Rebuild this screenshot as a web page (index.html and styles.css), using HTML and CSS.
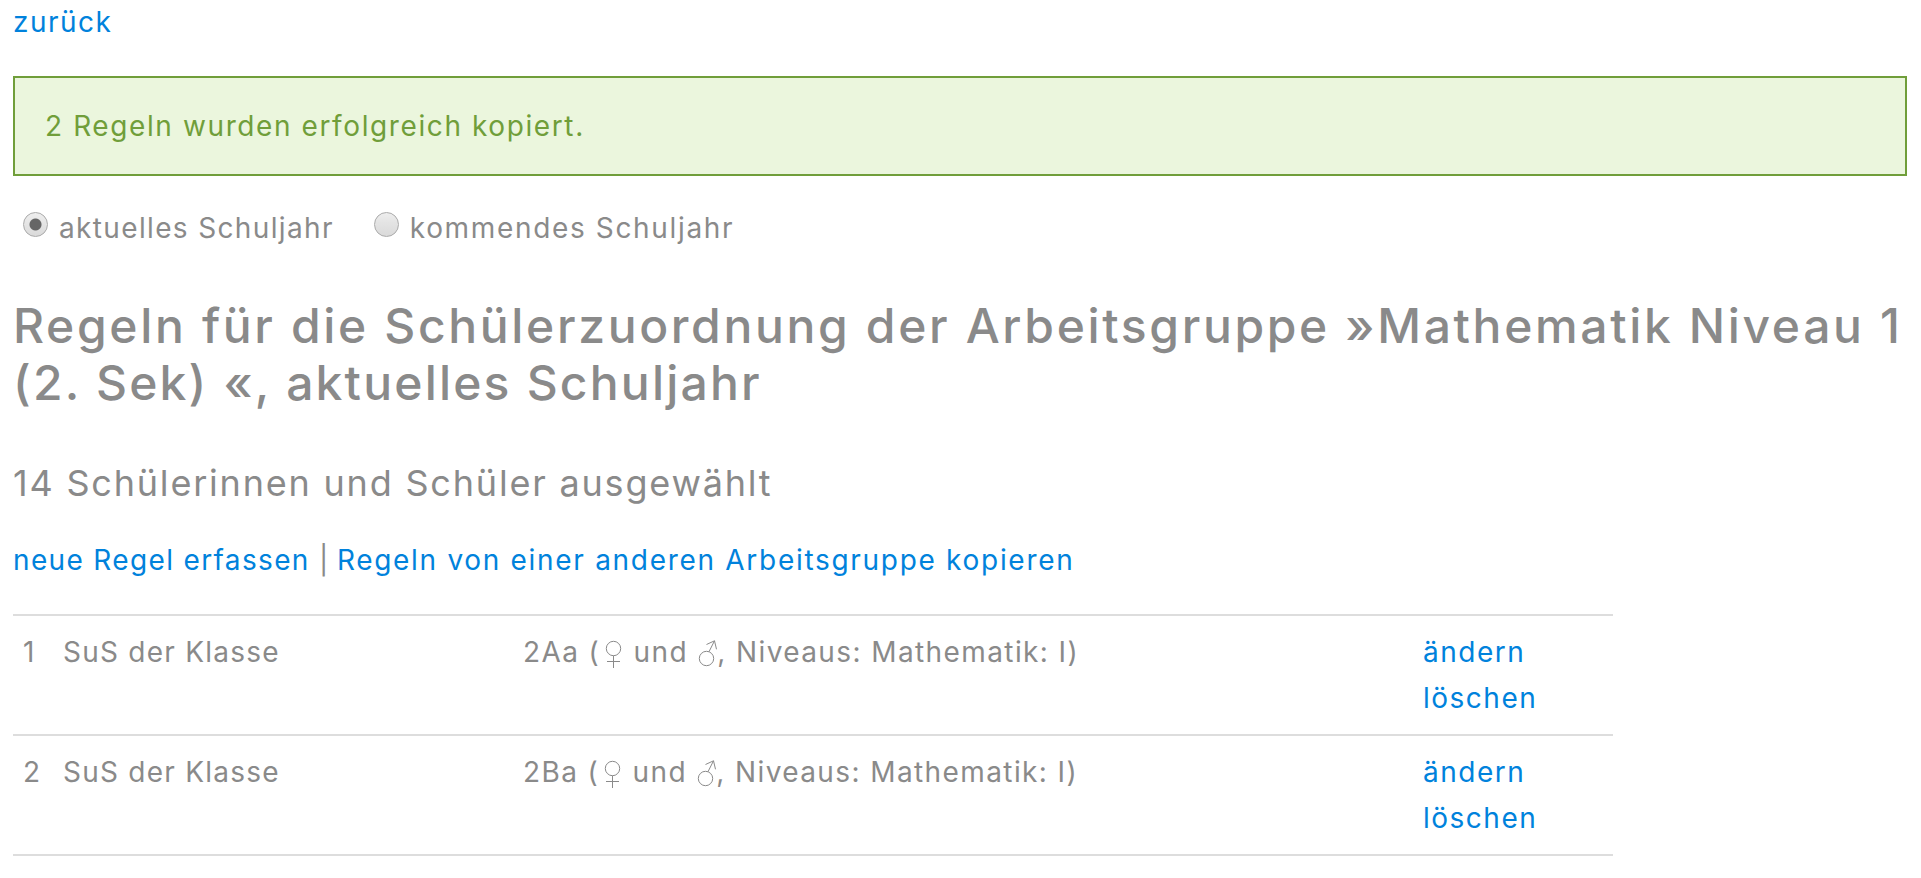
FILE: index.html
```html
<!DOCTYPE html>
<html lang="de">
<head>
    <meta charset="UTF-8">
    <meta name="viewport" content="width=device-width, initial-scale=1.0">
    <title>Regeln für die Schülerzuordnung</title>
    <link rel="stylesheet" href="styles.css">
</head>
<body>
    <!-- Symbole für die Geschlechter -->
    <svg class="symbols" aria-hidden="true">
        <symbol id="female" viewBox="0 0 20 30">
            <circle cx="9.5" cy="8.5" r="7.2"/>
            <path d="M9.5 15.7V28M3 21.5h13"/>
        </symbol>
        <symbol id="male" viewBox="0 0 22 30">
            <circle cx="9.5" cy="18.5" r="7.2"/>
            <path d="M12 11.7L17.5 .8M9.5 4.5L17.5 .8L19.5 9.3"/>
        </symbol>
    </svg>

    <p class="back"><a href="#">zurück</a></p>

    <div class="success">2 Regeln wurden erfolgreich kopiert.</div>

    <form class="years">
        <label><input type="radio" name="year" checked><span>aktuelles Schuljahr</span></label>
        <label class="next"><input type="radio" name="year"><span>kommendes Schuljahr</span></label>
    </form>

    <h1>Regeln für die Schülerzuordnung der Arbeitsgruppe »Mathematik Niveau 1<br><span class="rest">(2. Sek) «, aktuelles Schuljahr</span></h1>
    <h2>14 Schülerinnen und Schüler ausgewählt</h2>

    <p class="actions"><a href="#">neue Regel erfassen</a> | <a class="copy" href="#">Regeln von einer anderen Arbeitsgruppe kopieren</a></p>

    <table class="rules">
        <tr>
            <td class="nr">1</td>
            <td class="type">SuS der Klasse</td>
            <td class="value">2Aa (<svg class="female"><use href="#female"/></svg> und <svg class="male"><use href="#male"/></svg>, Niveaus: Mathematik: I)</td>
            <td class="edit"><a href="#">ändern</a><br><a href="#">löschen</a></td>
        </tr>
        <tr>
            <td class="nr">2</td>
            <td class="type">SuS der Klasse</td>
            <td class="value">2Ba (<svg class="female"><use href="#female"/></svg> und <svg class="male"><use href="#male"/></svg>, Niveaus: Mathematik: I)</td>
            <td class="edit"><a href="#">ändern</a><br><a href="#">löschen</a></td>
        </tr>
    </table>
</body>
</html>
```
FILE: styles.css
```css
body {
    margin: 0 14px 0 13px;
    background-color: #fff;
    color: #8a8a8a;
    font-family: Inter, "Open Sans", sans-serif;
    font-size: 28px;
    line-height: 42px;
    letter-spacing: 1.35px;
}

a {
    color: #0082dc;
    text-decoration: none;
}

.symbols {
    position: absolute;
    width: 0;
    height: 0;
}

.back {
    margin: 0 0 32px;
    line-height: 44px;
    letter-spacing: 1.5px;
}

.success {
    padding: 27px 30px;
    border: 2px solid #709e3a;
    background-color: #ebf6dd;
    color: #709e3a;
    letter-spacing: 1.6px;
}

.years {
    display: flex;
    gap: 40px;
    margin: 31px 0 48px 10px;
}

.years label {
    display: flex;
}

.years .next {
    letter-spacing: 1.65px;
}

.years input {
    appearance: none;
    box-sizing: border-box;
    width: 25px;
    height: 25px;
    margin: 5px 11px 0 0;
    border: 1px solid #aaa;
    border-radius: 50%;
    background: linear-gradient(#eee 0%, #e4e4e4 40%, #dadada 100%);
}

.years input:checked {
    background: radial-gradient(circle, #666 5.5px, transparent 6.5px), linear-gradient(#eee, #dadada);
}

h1 {
    margin: 0 0 50px;
    font-size: 48px;
    font-weight: 500;
    line-height: 57px;
    letter-spacing: 2.65px;
    white-space: nowrap;
}

h1 .rest {
    letter-spacing: 2.2px;
}

h2 {
    margin: 0 0 32px;
    font-size: 36px;
    font-weight: 400;
    line-height: 44px;
    letter-spacing: 1.8px;
}

.actions {
    margin: 0 0 31px;
    line-height: 46px;
}

.actions .copy {
    margin-left: -2px;
    letter-spacing: 1.7px;
}

.rules {
    width: 1600px;
    table-layout: fixed;
    border-collapse: separate;
    border-spacing: 0;
    border-bottom: 2px solid #ddd;
    line-height: 46px;
}

.rules td {
    padding: 13px 10px;
    border-top: 2px solid #ddd;
    vertical-align: top;
}

.rules .nr {
    width: 20px;
}

.rules .type {
    width: 440px;
    letter-spacing: 1.25px;
}

.rules .value {
    width: 880px;
    letter-spacing: 1.4px;
}

.rules .edit {
    letter-spacing: 1.5px;
}

.rules svg {
    height: 30px;
    vertical-align: -8px;
    fill: none;
    stroke: #8a8a8a;
    stroke-width: 1;
}

.rules .female {
    width: 20px;
    margin-left: 4px;
}

.rules .male {
    width: 22px;
    margin-right: -2px;
}
```
